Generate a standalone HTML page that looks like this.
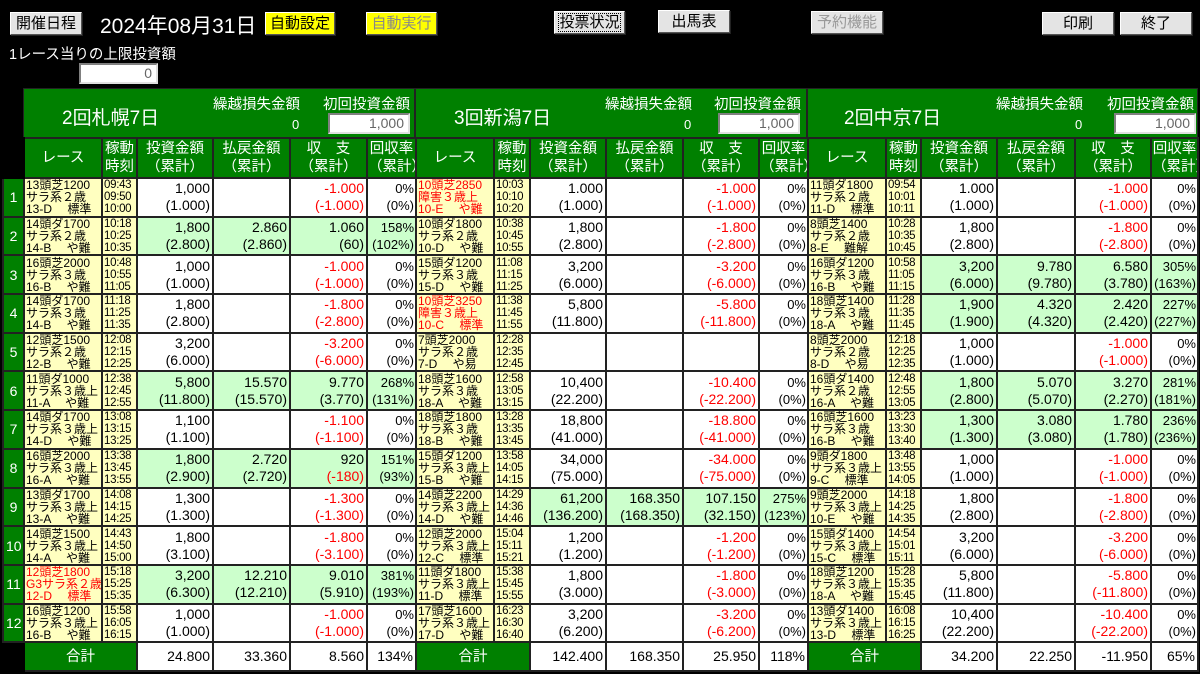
<!DOCTYPE html>
<html><head><meta charset="utf-8"><style>
*{margin:0;padding:0;box-sizing:border-box}
body{width:1200px;height:674px;background:#000;position:relative;overflow:hidden;font-family:"Liberation Sans","Noto Sans CJK JP",sans-serif;color:#000}
.btn{position:absolute;height:23px;background:#e4e4e4;border:1px solid;border-color:#fff #555 #555 #fff;box-shadow:1px 1px 0 #222;font-size:15px;text-align:center;line-height:21px}
.ye{background:#ffff00}
.w{color:#fff;position:absolute}
.inp{position:absolute;background:#fff;border:2px solid;border-color:#808080 #e0e0e0 #e0e0e0 #808080;text-align:right;font-size:14px;color:#666;padding-right:4px;line-height:17px}
#title{position:absolute;left:23px;top:88px;width:1175px;height:50px;background:#008000;border:1px solid #222}
.sep{position:absolute;top:0;width:2px;height:50px;background:#222}
table{position:absolute;left:2px;top:137px;width:1195px;border-collapse:collapse;table-layout:fixed}
td{border:2px solid #222;padding:0 2px;overflow:hidden;white-space:nowrap}
tr.d td{height:38.7px}
tr.d td:nth-child(7),tr.d td:nth-child(13),tr.d td:nth-child(19){font-size:13px;padding:0 1px}
.n{background:#008000;color:#fff;text-align:center;font-size:14px}
.h{background:#008000;color:#fff;text-align:center;font-size:14.5px;line-height:18px;padding:0}
.r,.t{background:#ffffc0;font-size:12px;line-height:12px;padding:0 1px}
.t{font-size:11.5px;letter-spacing:-0.3px}
.v{background:#fff;text-align:right;font-size:14px;line-height:17px}
.g{background:#ccffcc}
.red{color:#f00}
.bk{background:#000;border-color:#000}
.tot{height:29px!important}
</style></head><body>
<div class="btn" style="left:10px;top:12px;width:72px">開催日程</div>
<div class="w" style="left:100px;top:10px;font-size:21px">2024年08月31日</div>
<div class="btn ye" style="left:265px;top:12px;width:70px">自動設定</div>
<div class="btn ye" style="left:366px;top:12px;width:71px;color:#888">自動実行</div>
<div class="btn" style="left:554px;top:11px;width:71px"><span style="outline:1px dotted #000">投票状況</span></div>
<div class="btn" style="left:658px;top:10px;width:72px">出馬表</div>
<div class="btn" style="left:811px;top:11px;width:72px;color:#999">予約機能</div>
<div class="btn" style="left:1042px;top:12px;width:72px">印刷</div>
<div class="btn" style="left:1120px;top:12px;width:72px">終了</div>
<div class="w" style="left:9px;top:43px;font-size:14.5px">1レース当りの上限投資額</div>
<div class="inp" style="left:79px;top:63px;width:79px;height:21px">0</div>

<div id="title">
<div class="sep" style="left:390px"></div><div class="sep" style="left:782px"></div>
<div class="w" style="left:38px;top:14px;font-size:19px">2回札幌7日</div>
<div class="w" style="left:189px;top:4px;font-size:14.5px">繰越損失金額</div>
<div class="w" style="left:268px;top:28px;font-size:13px">0</div>
<div class="w" style="left:299px;top:4px;font-size:14.5px">初回投資金額</div>
<div class="inp" style="left:304px;top:24px;width:82px;height:21px">1,000</div>
<div class="w" style="left:430px;top:14px;font-size:19px">3回新潟7日</div>
<div class="w" style="left:581px;top:4px;font-size:14.5px">繰越損失金額</div>
<div class="w" style="left:660px;top:28px;font-size:13px">0</div>
<div class="w" style="left:690px;top:4px;font-size:14.5px">初回投資金額</div>
<div class="inp" style="left:694px;top:24px;width:82px;height:21px">1,000</div>
<div class="w" style="left:820px;top:14px;font-size:19px">2回中京7日</div>
<div class="w" style="left:972px;top:4px;font-size:14.5px">繰越損失金額</div>
<div class="w" style="left:1051px;top:28px;font-size:13px">0</div>
<div class="w" style="left:1083px;top:4px;font-size:14.5px">初回投資金額</div>
<div class="inp" style="left:1090px;top:24px;width:82px;height:21px">1,000</div>
</div>

<table>
<colgroup><col style="width:21px">
<col style="width:78px"><col style="width:35px"><col style="width:76px"><col style="width:77px"><col style="width:77px"><col style="width:49px">
<col style="width:78px"><col style="width:36px"><col style="width:76px"><col style="width:77px"><col style="width:76px"><col style="width:49px">
<col style="width:78px"><col style="width:35px"><col style="width:76px"><col style="width:78px"><col style="width:76px"><col style="width:47px">
</colgroup>
<tr style="height:40px"><td class="bk"></td>
<td class="h">レース</td><td class="h">稼動<br>時刻</td><td class="h">投資金額<br>（累計）</td><td class="h">払戻金額<br>（累計）</td><td class="h">収　支<br>（累計）</td><td class="h">回収率<br>（累計）</td>
<td class="h">レース</td><td class="h">稼動<br>時刻</td><td class="h">投資金額<br>（累計）</td><td class="h">払戻金額<br>（累計）</td><td class="h">収　支<br>（累計）</td><td class="h">回収率<br>（累計）</td>
<td class="h">レース</td><td class="h">稼動<br>時刻</td><td class="h">投資金額<br>（累計）</td><td class="h">払戻金額<br>（累計）</td><td class="h">収　支<br>（累計）</td><td class="h">回収率<br>（累計）</td></tr>

<tr class="d"><td class="n">1</td>
<td class="r">13頭芝1200<br>サラ系２歳<br>13-D　 標準</td><td class="t">09:43<br>09:50<br>10:00</td><td class="v">1,000<br>(1.000)</td><td class="v"></td><td class="v red">-1.000<br>(-1.000)</td><td class="v">0%<br>(0%)</td>
<td class="r red">10頭芝2850<br>障害３歳上<br>10-E　 や難</td><td class="t">10:03<br>10:10<br>10:20</td><td class="v">1.000<br>(1.000)</td><td class="v"></td><td class="v red">-1.000<br>(-1.000)</td><td class="v">0%<br>(0%)</td>
<td class="r">11頭ダ1800<br>サラ系２歳<br>11-D　 標準</td><td class="t">09:54<br>10:01<br>10:11</td><td class="v">1.000<br>(1.000)</td><td class="v"></td><td class="v red">-1.000<br>(-1.000)</td><td class="v">0%<br>(0%)</td></tr>

<tr class="d"><td class="n">2</td>
<td class="r">14頭ダ1700<br>サラ系２歳<br>14-B　 や難</td><td class="t">10:18<br>10:25<br>10:35</td><td class="v g">1,800<br>(2.800)</td><td class="v g">2.860<br>(2.860)</td><td class="v g">1.060<br>(60)</td><td class="v g">158%<br>(102%)</td>
<td class="r">10頭ダ1800<br>サラ系２歳<br>10-D　 や難</td><td class="t">10:38<br>10:45<br>10:55</td><td class="v">1,800<br>(2.800)</td><td class="v"></td><td class="v red">-1.800<br>(-2.800)</td><td class="v">0%<br>(0%)</td>
<td class="r">8頭芝1400<br>サラ系２歳<br>8-E　 難解</td><td class="t">10:28<br>10:35<br>10:45</td><td class="v">1,800<br>(2.800)</td><td class="v"></td><td class="v red">-1.800<br>(-2.800)</td><td class="v">0%<br>(0%)</td></tr>

<tr class="d"><td class="n">3</td>
<td class="r">16頭芝2000<br>サラ系３歳<br>16-B　 や難</td><td class="t">10:48<br>10:55<br>11:05</td><td class="v">1,000<br>(1.000)</td><td class="v"></td><td class="v red">-1.000<br>(-1.000)</td><td class="v">0%<br>(0%)</td>
<td class="r">15頭ダ1200<br>サラ系３歳<br>15-D　 や難</td><td class="t">11:08<br>11:15<br>11:25</td><td class="v">3,200<br>(6.000)</td><td class="v"></td><td class="v red">-3.200<br>(-6.000)</td><td class="v">0%<br>(0%)</td>
<td class="r">16頭ダ1200<br>サラ系３歳<br>16-B　 や難</td><td class="t">10:58<br>11:05<br>11:15</td><td class="v g">3,200<br>(6.000)</td><td class="v g">9.780<br>(9.780)</td><td class="v g">6.580<br>(3.780)</td><td class="v g">305%<br>(163%)</td></tr>

<tr class="d"><td class="n">4</td>
<td class="r">14頭ダ1700<br>サラ系３歳<br>14-B　 や難</td><td class="t">11:18<br>11:25<br>11:35</td><td class="v">1,800<br>(2.800)</td><td class="v"></td><td class="v red">-1.800<br>(-2.800)</td><td class="v">0%<br>(0%)</td>
<td class="r red">10頭芝3250<br>障害３歳上<br>10-C　 標準</td><td class="t">11:38<br>11:45<br>11:55</td><td class="v">5,800<br>(11.800)</td><td class="v"></td><td class="v red">-5.800<br>(-11.800)</td><td class="v">0%<br>(0%)</td>
<td class="r">18頭芝1400<br>サラ系３歳<br>18-A　 や難</td><td class="t">11:28<br>11:35<br>11:45</td><td class="v g">1,900<br>(1.900)</td><td class="v g">4.320<br>(4.320)</td><td class="v g">2.420<br>(2.420)</td><td class="v g">227%<br>(227%)</td></tr>

<tr class="d"><td class="n">5</td>
<td class="r">12頭芝1500<br>サラ系２歳<br>12-B　 や難</td><td class="t">12:08<br>12:15<br>12:25</td><td class="v">3,200<br>(6.000)</td><td class="v"></td><td class="v red">-3.200<br>(-6.000)</td><td class="v">0%<br>(0%)</td>
<td class="r">7頭芝2000<br>サラ系２歳<br>7-D　 や易</td><td class="t">12:28<br>12:35<br>12:45</td><td class="v"></td><td class="v"></td><td class="v"></td><td class="v"></td>
<td class="r">8頭芝2000<br>サラ系２歳<br>8-D　 や易</td><td class="t">12:18<br>12:25<br>12:35</td><td class="v">1,000<br>(1.000)</td><td class="v"></td><td class="v red">-1.000<br>(-1.000)</td><td class="v">0%<br>(0%)</td></tr>

<tr class="d"><td class="n">6</td>
<td class="r">11頭ダ1000<br>サラ系３歳上<br>11-A　 や難</td><td class="t">12:38<br>12:45<br>12:55</td><td class="v g">5,800<br>(11.800)</td><td class="v g">15.570<br>(15.570)</td><td class="v g">9.770<br>(3.770)</td><td class="v g">268%<br>(131%)</td>
<td class="r">18頭芝1600<br>サラ系３歳<br>18-A　 や難</td><td class="t">12:58<br>13:05<br>13:15</td><td class="v">10,400<br>(22.200)</td><td class="v"></td><td class="v red">-10.400<br>(-22.200)</td><td class="v">0%<br>(0%)</td>
<td class="r">16頭ダ1400<br>サラ系２歳<br>16-A　 や難</td><td class="t">12:48<br>12:55<br>13:05</td><td class="v g">1,800<br>(2.800)</td><td class="v g">5.070<br>(5.070)</td><td class="v g">3.270<br>(2.270)</td><td class="v g">281%<br>(181%)</td></tr>

<tr class="d"><td class="n">7</td>
<td class="r">14頭ダ1700<br>サラ系３歳上<br>14-D　 や難</td><td class="t">13:08<br>13:15<br>13:25</td><td class="v">1,100<br>(1.100)</td><td class="v"></td><td class="v red">-1.100<br>(-1.100)</td><td class="v">0%<br>(0%)</td>
<td class="r">18頭芝1800<br>サラ系３歳<br>18-B　 や難</td><td class="t">13:28<br>13:35<br>13:45</td><td class="v">18,800<br>(41.000)</td><td class="v"></td><td class="v red">-18.800<br>(-41.000)</td><td class="v">0%<br>(0%)</td>
<td class="r">16頭芝1600<br>サラ系３歳<br>16-B　 や難</td><td class="t">13:23<br>13:30<br>13:40</td><td class="v g">1,300<br>(1.300)</td><td class="v g">3.080<br>(3.080)</td><td class="v g">1.780<br>(1.780)</td><td class="v g">236%<br>(236%)</td></tr>

<tr class="d"><td class="n">8</td>
<td class="r">16頭芝2000<br>サラ系３歳上<br>16-A　 や難</td><td class="t">13:38<br>13:45<br>13:55</td><td class="v g">1,800<br>(2.900)</td><td class="v g">2.720<br>(2.720)</td><td class="v g">920<br><span class="red">(-180)</span></td><td class="v g">151%<br>(93%)</td>
<td class="r">15頭ダ1200<br>サラ系３歳上<br>15-B　 や難</td><td class="t">13:58<br>14:05<br>14:15</td><td class="v">34,000<br>(75.000)</td><td class="v"></td><td class="v red">-34.000<br>(-75.000)</td><td class="v">0%<br>(0%)</td>
<td class="r">9頭ダ1800<br>サラ系３歳上<br>9-C　 標準</td><td class="t">13:48<br>13:55<br>14:05</td><td class="v">1,000<br>(1.000)</td><td class="v"></td><td class="v red">-1.000<br>(-1.000)</td><td class="v">0%<br>(0%)</td></tr>

<tr class="d"><td class="n">9</td>
<td class="r">13頭ダ1700<br>サラ系３歳上<br>13-A　 や難</td><td class="t">14:08<br>14:15<br>14:25</td><td class="v">1,300<br>(1.300)</td><td class="v"></td><td class="v red">-1.300<br>(-1.300)</td><td class="v">0%<br>(0%)</td>
<td class="r">14頭芝2200<br>サラ系３歳上<br>14-D　 や難</td><td class="t">14:29<br>14:36<br>14:46</td><td class="v g">61,200<br>(136.200)</td><td class="v g">168.350<br>(168.350)</td><td class="v g">107.150<br>(32.150)</td><td class="v g">275%<br>(123%)</td>
<td class="r">9頭芝2000<br>サラ系３歳上<br>10-E　 や難</td><td class="t">14:18<br>14:25<br>14:35</td><td class="v">1,800<br>(2.800)</td><td class="v"></td><td class="v red">-1.800<br>(-2.800)</td><td class="v">0%<br>(0%)</td></tr>

<tr class="d"><td class="n">10</td>
<td class="r">14頭芝1500<br>サラ系３歳上<br>14-A　 や難</td><td class="t">14:43<br>14:50<br>15:00</td><td class="v">1,800<br>(3.100)</td><td class="v"></td><td class="v red">-1.800<br>(-3.100)</td><td class="v">0%<br>(0%)</td>
<td class="r">12頭芝2000<br>サラ系３歳上<br>12-C　 標準</td><td class="t">15:04<br>15:11<br>15:21</td><td class="v">1,200<br>(1.200)</td><td class="v"></td><td class="v red">-1.200<br>(-1.200)</td><td class="v">0%<br>(0%)</td>
<td class="r">15頭ダ1400<br>サラ系３歳上<br>15-C　 標準</td><td class="t">14:54<br>15:01<br>15:11</td><td class="v">3,200<br>(6.000)</td><td class="v"></td><td class="v red">-3.200<br>(-6.000)</td><td class="v">0%<br>(0%)</td></tr>

<tr class="d"><td class="n">11</td>
<td class="r red">12頭芝1800<br>G3サラ系２歳<br>12-D　 標準</td><td class="t">15:18<br>15:25<br>15:35</td><td class="v g">3,200<br>(6.300)</td><td class="v g">12.210<br>(12.210)</td><td class="v g">9.010<br>(5.910)</td><td class="v g">381%<br>(193%)</td>
<td class="r">11頭ダ1800<br>サラ系３歳上<br>11-D　 標準</td><td class="t">15:38<br>15:45<br>15:55</td><td class="v">1,800<br>(3.000)</td><td class="v"></td><td class="v red">-1.800<br>(-3.000)</td><td class="v">0%<br>(0%)</td>
<td class="r">18頭芝1200<br>サラ系３歳上<br>18-A　 や難</td><td class="t">15:28<br>15:35<br>15:45</td><td class="v">5,800<br>(11.800)</td><td class="v"></td><td class="v red">-5.800<br>(-11.800)</td><td class="v">0%<br>(0%)</td></tr>

<tr class="d"><td class="n">12</td>
<td class="r">16頭芝1200<br>サラ系３歳上<br>16-B　 や難</td><td class="t">15:58<br>16:05<br>16:15</td><td class="v">1,000<br>(1.000)</td><td class="v"></td><td class="v red">-1.000<br>(-1.000)</td><td class="v">0%<br>(0%)</td>
<td class="r">17頭芝1600<br>サラ系３歳上<br>17-D　 や難</td><td class="t">16:23<br>16:30<br>16:40</td><td class="v">3,200<br>(6.200)</td><td class="v"></td><td class="v red">-3.200<br>(-6.200)</td><td class="v">0%<br>(0%)</td>
<td class="r">13頭ダ1400<br>サラ系３歳上<br>13-D　 標準</td><td class="t">16:08<br>16:15<br>16:25</td><td class="v">10,400<br>(22.200)</td><td class="v"></td><td class="v red">-10.400<br>(-22.200)</td><td class="v">0%<br>(0%)</td></tr>

<tr><td class="bk tot"></td>
<td class="h tot" colspan="2">合計</td><td class="v tot">24.800</td><td class="v tot">33.360</td><td class="v tot">8.560</td><td class="v tot">134%</td>
<td class="h tot" colspan="2">合計</td><td class="v tot">142.400</td><td class="v tot">168.350</td><td class="v tot">25.950</td><td class="v tot">118%</td>
<td class="h tot" colspan="2">合計</td><td class="v tot">34.200</td><td class="v tot">22.250</td><td class="v tot">-11.950</td><td class="v tot">65%</td></tr>
</table>
</body></html>
